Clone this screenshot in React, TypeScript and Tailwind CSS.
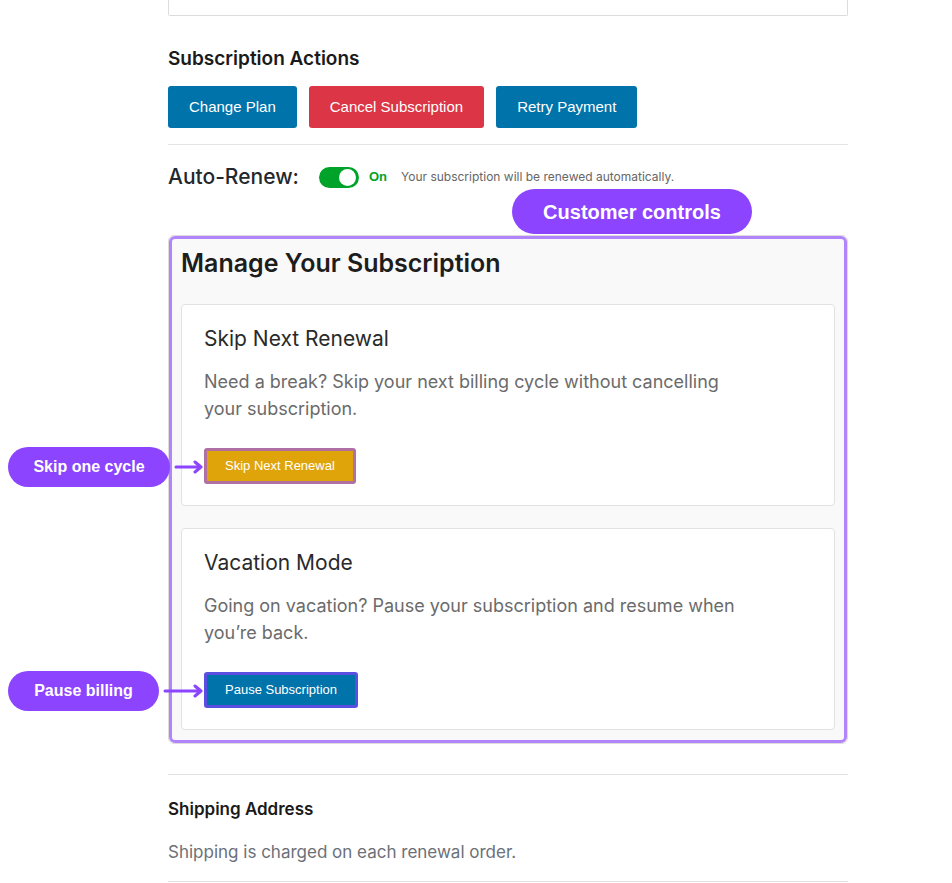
import type { ReactNode } from 'react';

const bodyFont = { fontFamily: 'Inter, "Noto Sans", sans-serif' };
const btnFont = { fontFamily: '"Liberation Sans", Arial, sans-serif' };

interface CalloutProps {
	label: string;
	pillWidth: number;
	arrowWidth: number;
	className: string;
}

function Callout({ label, pillWidth, arrowWidth, className }: CalloutProps) {
	return (
		<div className={`absolute flex items-center ${className}`} style={btnFont}>
			<div
				className="flex h-10 items-center justify-center rounded-full bg-[#8c44ff] text-[16px] font-bold text-white"
				style={{ width: pillWidth }}
			>
				{label}
			</div>
			<svg width={arrowWidth} height="14" viewBox={`0 0 ${arrowWidth} 14`} className="ml-[4px]">
				<path
					d={`M2 7 H${arrowWidth - 4} M${arrowWidth - 10} 2 L${arrowWidth - 4} 7 L${arrowWidth - 10} 12`}
					fill="none"
					stroke="#8c44ff"
					strokeWidth="3"
					strokeLinecap="round"
					strokeLinejoin="round"
				/>
			</svg>
		</div>
	);
}

interface OptionCardProps {
	title: string;
	text: ReactNode;
	button: ReactNode;
}

function OptionCard({ title, text, button }: OptionCardProps) {
	return (
		<div className="rounded-[4px] border border-[#e2e2e2] bg-white px-[22px] pt-[21px] pb-[21px]">
			<h3 className="text-[21px] leading-[26px] text-[#2a2a2a]">{title}</h3>
			<p className="mt-[16px] max-w-[548px] text-[18px] leading-[27px] text-[#6b6b6b]">{text}</p>
			<div className="mt-[26px] flex">{button}</div>
		</div>
	);
}

export default function App() {
	return (
		<div className="relative min-h-[883px] bg-white" style={bodyFont}>
			<div className="ml-[168px] w-[680px]">
				<div className="h-[16px] rounded-b-[2px] border border-t-0 border-[#dcdcdc]" />

				<h2 className="mt-[33px] text-[19px] font-semibold leading-[20px] text-[#1a1a1a]">
					Subscription Actions
				</h2>
				<div className="mt-[17px] flex gap-3" style={btnFont}>
					<button className="h-[42px] rounded-[3px] bg-[#0073aa] px-[21px] text-[15px] text-white">
						Change Plan
					</button>
					<button className="h-[42px] rounded-[3px] bg-[#dc3545] px-[21px] text-[15px] text-white">
						Cancel Subscription
					</button>
					<button className="h-[42px] rounded-[3px] bg-[#0073aa] px-[21px] text-[15px] text-white">
						Retry Payment
					</button>
				</div>

				<div className="mt-[16px] border-t border-[#e5e5e5]" />

				<div className="mt-[21px] flex h-[22px] items-center">
					<span className="text-[21px] font-medium text-[#23282d]">Auto-Renew:</span>
					<span className="ml-[20px] flex h-[21px] w-[40px] items-center rounded-full bg-[#00a32a] px-[3px]">
						<span className="ml-auto h-[17px] w-[17px] rounded-full bg-white" />
					</span>
					<span className="ml-[10px] text-[13px] font-bold text-[#00a32a]" style={btnFont}>
						On
					</span>
					<span className="ml-[14px] text-[12px] text-[#666]">
						Your subscription will be renewed automatically.
					</span>
				</div>

				<div className="mt-[1px] flex justify-end pr-[96px]">
					<div
						className="flex h-[45px] w-[240px] items-center justify-center rounded-full bg-[#8c44ff] text-[20px] font-bold text-white"
						style={btnFont}
					>
						Customer controls
					</div>
				</div>

				<div className="relative mt-[1px] rounded-[6px] border border-[#dcdcdc] bg-[#f9f9f9] px-[12px] pt-[11px] pb-[13px]">
					<div className="pointer-events-none absolute inset-0 rounded-[6px] border-[3px] border-[#b184fb]" />
					<h2 className="text-[25px] font-semibold leading-[32px] text-[#1d1d1d]">
						Manage Your Subscription
					</h2>
					<div className="mt-[25px] flex flex-col gap-[22px]">
						<OptionCard
							title="Skip Next Renewal"
							text="Need a break? Skip your next billing cycle without cancelling your subscription."
							button={
								<button
									className="h-[36px] rounded-[3px] border-[3px] border-[#b170a3] bg-[#e0a40b] px-[18px] text-[13px] text-white"
									style={btnFont}
								>
									Skip Next Renewal
								</button>
							}
						/>
						<OptionCard
							title="Vacation Mode"
							text="Going on vacation? Pause your subscription and resume when you’re back."
							button={
								<button
									className="h-[36px] rounded-[3px] border-[3px] border-[#5a4fe0] bg-[#0073aa] px-[18px] text-[13px] text-white"
									style={btnFont}
								>
									Pause Subscription
								</button>
							}
						/>
					</div>
				</div>

				<div className="mt-[30px] border-t border-[#e0e0e3]" />
				<h3 className="mt-[24px] text-[17px] font-semibold leading-[20px] text-[#1a1a1a]">
					Shipping Address
				</h3>
				<p className="mt-[21px] text-[17px] leading-[24px] text-[#6b7079]">
					Shipping is charged on each renewal order.
				</p>
				<div className="mt-[17px] border-t border-[#e0e0e3]" />
			</div>

			<Callout label="Skip one cycle" pillWidth={162} arrowWidth={31} className="left-[8px] top-[447px]" />
			<Callout label="Pause billing" pillWidth={151} arrowWidth={42} className="left-[8px] top-[671px]" />
		</div>
	);
}
